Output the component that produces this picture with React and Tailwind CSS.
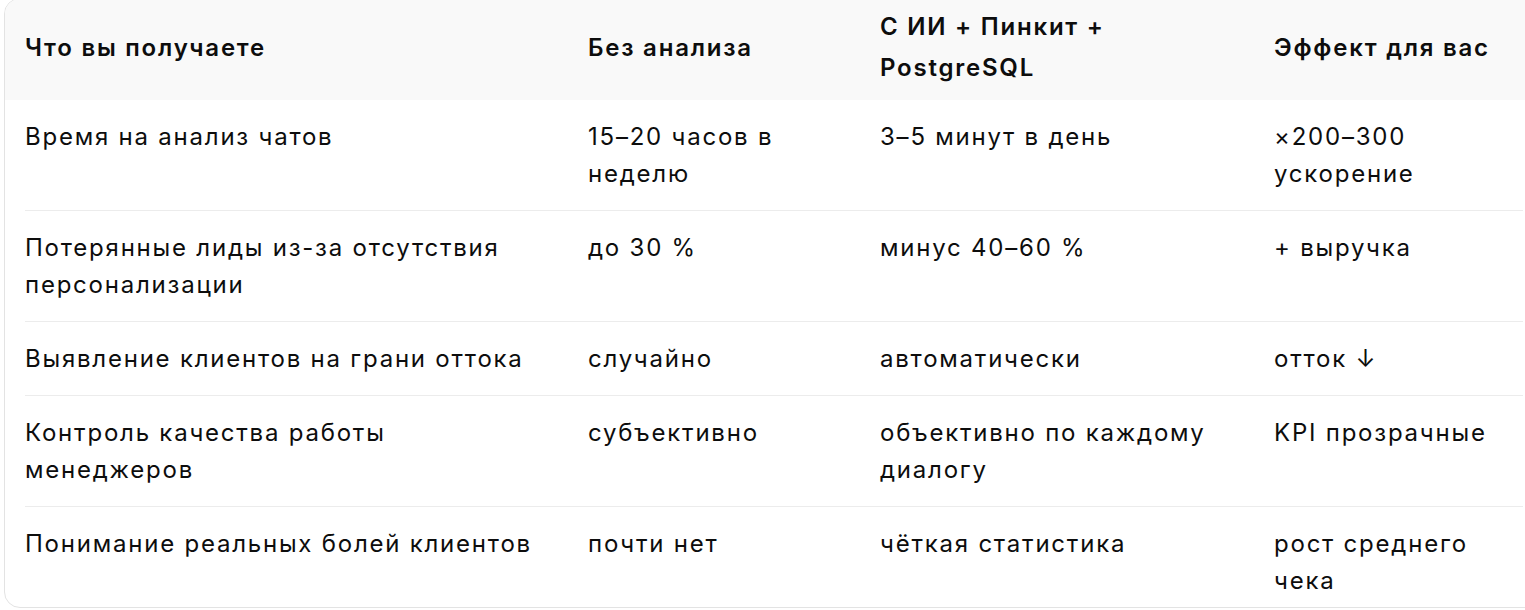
import React from 'react';

const rows = [
    ['Время на анализ чатов', '15–20 часов в неделю', '3–5 минут в день', '×200–300 ускорение'],
    ['Потерянные лиды из-за отсутствия персонализации', 'до 30 %', 'минус 40–60 %', '+ выручка'],
    ['Выявление клиентов на грани оттока', 'случайно', 'автоматически', 'отток ↓'],
    ['Контроль качества работы менеджеров', 'субъективно', 'объективно по каждому диалогу', 'KPI прозрачные'],
    ['Понимание реальных болей клиентов', 'почти нет', 'чёткая статистика', 'рост среднего чека'],
];

const head = ['Что вы получаете', 'Без анализа', 'С ИИ + Пинкит + PostgreSQL', 'Эффект для вас'];

const cols = 'grid grid-cols-[563px_292px_394px_243px]';

const App = () => {
    return (
        <div className="w-[1525px] h-[610px] overflow-hidden bg-white font-['Inter',sans-serif] text-[24px] tracking-[0.074em] text-[#0d0d0d]">
            <div className="ml-[4px] mt-[-2px] w-[1540px] rounded-2xl border border-[#e3e3e3] overflow-hidden">
                <div className="bg-[#f9f9f9] px-[20px]">
                    <div className={`${cols} items-center pt-[7px] pb-[12px] leading-[41px] font-semibold`}>
                        {head.map((h, j) => (
                            <div key={h} className={j === 0 ? 'pr-8' : 'pr-6'}>{h}</div>
                        ))}
                    </div>
                </div>
                <div className="px-[20px]">
                    {rows.map((r, i) => {
                        const last = i === rows.length - 1;
                        return (
                            <div
                                key={i}
                                className={`${cols} pt-[18px] leading-[37px] ${last ? 'pb-[8px]' : 'pb-[18px] border-b border-[#ececec]'}`}
                            >
                                {r.map((c, j) => (
                                    <div key={j} className={j === 0 ? 'pr-8' : 'pr-6'}>{c}</div>
                                ))}
                            </div>
                        );
                    })}
                </div>
            </div>
        </div>
    );
};

export default App;
